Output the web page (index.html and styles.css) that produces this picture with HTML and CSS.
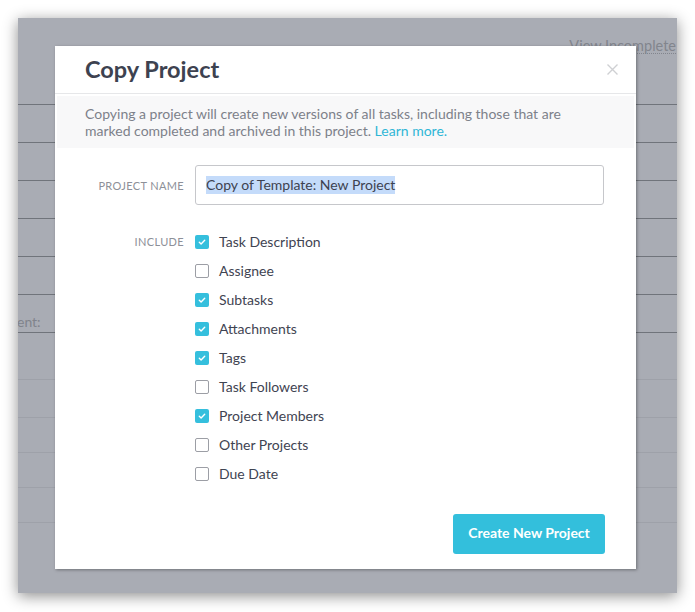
FILE: index.html
```html
<!DOCTYPE html>
<html>
<head>
<meta charset="utf-8">
<link rel="stylesheet" href="styles.css">
</head>
<body>
<div class="window">
  <div class="topbar"><span class="view-link">View Incomplete</span></div>
  <div class="row dark"></div>
  <div class="row dark"></div>
  <div class="row dark"></div>
  <div class="row dark"></div>
  <div class="row dark"></div>
  <div class="row dark"><span class="cut">ent:</span></div>
  <div class="row light r47"></div>
  <div class="row light r38"></div>
  <div class="row light r35"></div>
  <div class="row light r35"></div>
  <div class="row light r35"></div>

  <div class="modal">
    <div class="modal-header">
      <h1 class="title">Copy Project</h1>
      <svg class="close" width="11" height="11" viewBox="0 0 11 11"><path d="M0.5 0.5 L10.5 10.5 M10.5 0.5 L0.5 10.5" stroke="#cfd0d3" stroke-width="1.4" fill="none"/></svg>
    </div>
    <div class="info"><p class="info-text">Copying a project will create new versions of all tasks, including those that are marked completed and archived in this project. <span class="learn">Learn more.</span></p></div>
    <div class="form">
      <div class="label name-label">PROJECT NAME</div>
      <div class="input"><span class="sel">Copy of Template: New Project</span></div>
      <div class="label include-label">INCLUDE</div>
      <div class="checks">
        <div class="check"><span class="box on"><svg width="14" height="14" viewBox="0 0 14 14"><path d="M4.3 7.3 L6.1 9 L9.7 5.3" stroke="#fff" stroke-width="1.4" fill="none" stroke-linecap="round" stroke-linejoin="round"/></svg></span>Task Description</div>
        <div class="check"><span class="box"></span>Assignee</div>
        <div class="check"><span class="box on"><svg width="14" height="14" viewBox="0 0 14 14"><path d="M4.3 7.3 L6.1 9 L9.7 5.3" stroke="#fff" stroke-width="1.4" fill="none" stroke-linecap="round" stroke-linejoin="round"/></svg></span>Subtasks</div>
        <div class="check"><span class="box on"><svg width="14" height="14" viewBox="0 0 14 14"><path d="M4.3 7.3 L6.1 9 L9.7 5.3" stroke="#fff" stroke-width="1.4" fill="none" stroke-linecap="round" stroke-linejoin="round"/></svg></span>Attachments</div>
        <div class="check"><span class="box on"><svg width="14" height="14" viewBox="0 0 14 14"><path d="M4.3 7.3 L6.1 9 L9.7 5.3" stroke="#fff" stroke-width="1.4" fill="none" stroke-linecap="round" stroke-linejoin="round"/></svg></span>Tags</div>
        <div class="check"><span class="box"></span>Task Followers</div>
        <div class="check"><span class="box on"><svg width="14" height="14" viewBox="0 0 14 14"><path d="M4.3 7.3 L6.1 9 L9.7 5.3" stroke="#fff" stroke-width="1.4" fill="none" stroke-linecap="round" stroke-linejoin="round"/></svg></span>Project Members</div>
        <div class="check"><span class="box"></span>Other Projects</div>
        <div class="check"><span class="box"></span>Due Date</div>
      </div>
    </div>
    <div class="footer"><button class="btn">Create New Project</button></div>
  </div>
</div>
</body>
</html>
```
FILE: styles.css
```css
html, body {
  margin: 0;
  padding: 0;
  background: #ffffff;
  width: 695px;
  height: 612px;
  overflow: hidden;
}
body {
  font-family: "Lato", "Liberation Sans", sans-serif;
  color: #3d4250;
}
.window {
  position: relative;
  margin: 18px 0 0 18px;
  width: 659px;
  height: 575px;
  background: #a9acb4;
  box-shadow: 0 3px 14px rgba(0, 0, 0, 0.45);
  overflow: hidden;
}
.topbar {
  height: 86px;
  border-bottom: 1px solid #70747b;
  display: flex;
  justify-content: flex-end;
  align-items: flex-start;
}
.view-link {
  margin-top: 20px;
  margin-right: 1px;
  font-size: 14.5px;
  color: #82858d;
  border-bottom: 1px dotted #82858d;
  line-height: 15px;
}
.row {
  height: 37px;
  display: flex;
  align-items: center;
}
.row.dark { border-bottom: 1px solid #70747b; }
.row.light { border-bottom: 1px solid #9ea1a9; }
.row.r47 { height: 46px; }
.row.r38 { height: 37px; }
.row.r35 { height: 34px; }
.cut {
  margin-left: -1px;
  margin-top: 16px;
  font-size: 14px;
  color: #80838b;
}
.modal {
  position: absolute;
  left: 37px;
  top: 28px;
  width: 581px;
  height: 523px;
  background: #ffffff;
  box-shadow: 1px 1px 3px rgba(0, 0, 0, 0.35);
  display: flex;
  flex-direction: column;
}
.modal-header {
  height: 47px;
  border-bottom: 1px solid #e6e7e9;
  display: flex;
  justify-content: space-between;
  align-items: flex-start;
  padding: 0 18px 0 30px;
}
.title {
  margin: 9px 0 0 0;
  font-size: 23.5px;
  font-weight: 700;
  line-height: 28px;
  color: #3d4250;
}
.close { margin-top: 18px; }
.info {
  margin: 2px 2px 0 2px;
  background: #f8f8f9;
  height: 52px;
  box-sizing: border-box;
  padding: 9px 20px 0 28px;
}
.info-text {
  margin: 0;
  max-width: 482px;
  font-size: 14px;
  line-height: 17px;
  color: #7d818a;
}
.learn { color: #2fb6d6; }
.form {
  display: grid;
  grid-template-columns: 99px 409px;
  column-gap: 11px;
  padding: 17px 0 0 30px;
  align-items: start;
}
.label {
  text-align: right;
  font-size: 11px;
  letter-spacing: 0.35px;
  color: #8d9098;
}
.name-label { align-self: center; }
.include-label { margin-top: 30px; }
.input {
  height: 40px;
  box-sizing: border-box;
  border: 1px solid #c6c7cb;
  border-radius: 3px;
  display: flex;
  align-items: center;
  padding-left: 10px;
  font-size: 14px;
}
.sel {
  background: #c4dbfa;
  color: #3d4250;
  line-height: 18px;
}
.checks {
  margin-top: 22px;
  display: flex;
  flex-direction: column;
}
.check {
  height: 29px;
  display: flex;
  align-items: center;
  font-size: 14px;
  color: #3f4452;
}
.box {
  width: 14px;
  height: 14px;
  box-sizing: border-box;
  border: 1px solid #9c9ea5;
  border-radius: 2px;
  margin-right: 10px;
  display: flex;
}
.box.on {
  border: none;
  background: #35bfdd;
}
.footer {
  margin-top: auto;
  padding: 0 31px 15px 0;
  display: flex;
  justify-content: flex-end;
}
.btn {
  width: 152px;
  height: 40px;
  border: none;
  border-radius: 3px;
  background: #33bfdc;
  color: #ffffff;
  font-family: "Lato", "Liberation Sans", sans-serif;
  font-size: 14px;
  font-weight: 700;
  padding: 0 0 3px 0;
}
```
